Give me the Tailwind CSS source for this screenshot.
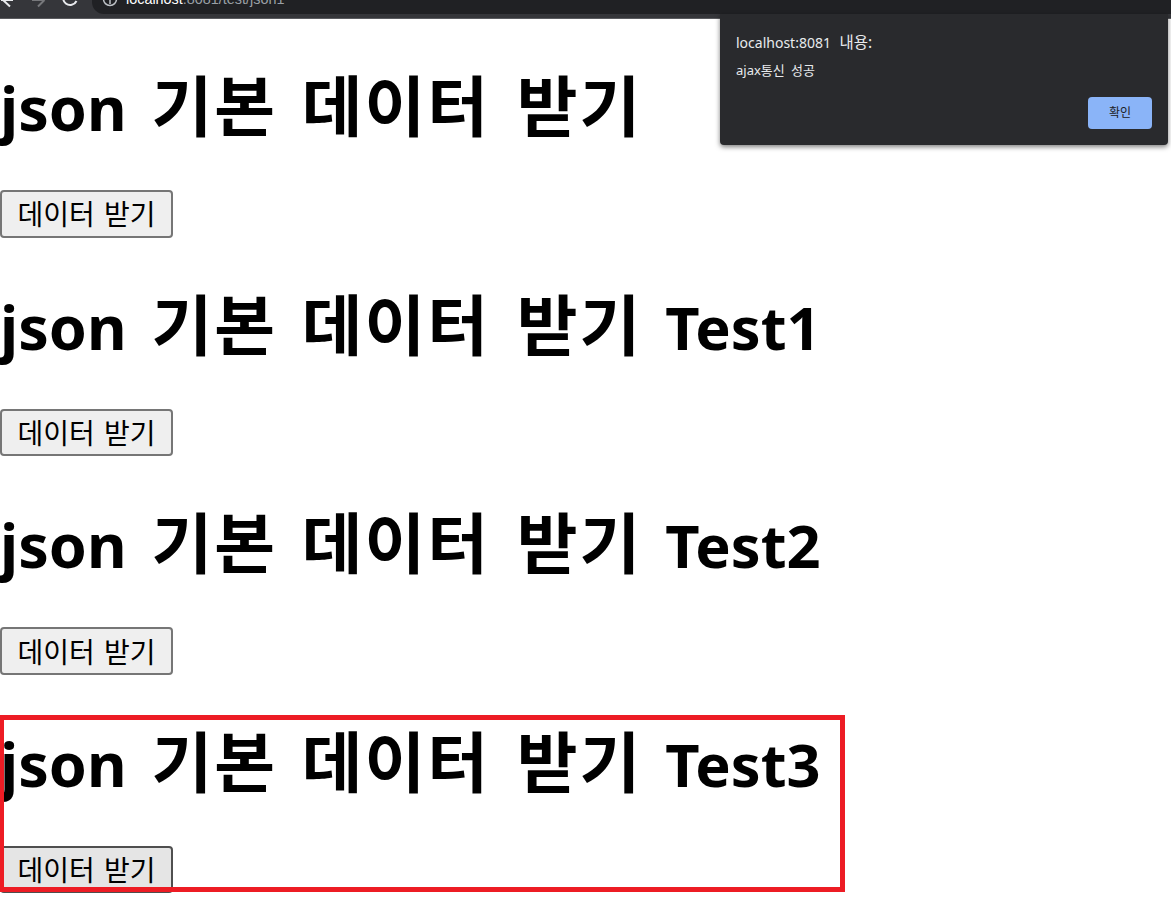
<!DOCTYPE html>
<html lang="ko">
<head>
<meta charset="utf-8">
<script src="https://cdn.jsdelivr.net/npm/@tailwindcss/browser@4"></script>
</head>
<body class="bg-white overflow-hidden font-['Noto_Sans','Noto_Sans_CJK_KR',sans-serif] text-black">
<div class="relative w-[1171px] h-[920px] overflow-hidden">
  <div class="h-[19px] bg-[#35363a] border-b border-[#5a5b5f] overflow-hidden flex items-start">
    <div class="w-[92px] h-[14px] shrink-0">
      <svg width="92" height="14" viewBox="0 0 92 14" fill="none">
        <path d="M1 0H13M3 0L10 6.5" stroke="#e8eaed" stroke-width="2"/>
        <path d="M32 0H44.5M44.5 0L38 6.5" stroke="#77787b" stroke-width="2"/>
        <path d="M76.5 1A7 7 0 1 1 76.5 -5" stroke="#e8eaed" stroke-width="2"/>
      </svg>
    </div>
    <div class="flex-1 h-[14px] bg-[#202124] rounded-bl-[12px] relative overflow-hidden">
      <svg class="absolute left-[10px] top-0" width="16" height="14" viewBox="0 0 16 14" fill="none">
        <circle cx="8" cy="-1" r="6.5" stroke="#bdc1c6" stroke-width="1.5"/>
        <path d="M8 0V4" stroke="#bdc1c6" stroke-width="1.5"/>
      </svg>
      <div class="absolute left-[34px] top-[-13px] text-[14.4px] leading-[24px] whitespace-nowrap text-[#9aa0a6] font-['Liberation_Sans',sans-serif]"><span class="text-white">localhost</span>:8081/test/json1</div>
    </div>
  </div>

  <section class="h-[218.67px] pt-[42px]">
    <h1 class="h-[88px] text-[61px] leading-[88px] font-bold whitespace-nowrap [word-spacing:9px]">json <span class="text-[66px] tracking-[2px]">기본</span> <span class="text-[66px] tracking-[2px]">데이터</span> <span class="text-[66px] tracking-[2px] ml-[2px]">받기</span></h1>
    <button class="mt-[41px] w-[173px] h-[47.5px] pt-[1px] bg-[#efefef] border-2 border-[#767676] rounded-[4px] text-[28px] leading-[40px] [word-spacing:2px] flex items-center justify-center">데이터 받기</button>
  </section>
  <section class="h-[218.67px] pt-[42px]">
    <h1 class="h-[88px] text-[61px] leading-[88px] font-bold whitespace-nowrap [word-spacing:9px]">json <span class="text-[66px] tracking-[2px]">기본</span> <span class="text-[66px] tracking-[2px]">데이터</span> <span class="text-[66px] tracking-[2px] ml-[2px]">받기</span> <span class="text-[59.5px] ml-[-2px]">Test1</span></h1>
    <button class="mt-[41px] w-[173px] h-[47.5px] pt-[1px] bg-[#efefef] border-2 border-[#767676] rounded-[4px] text-[28px] leading-[40px] [word-spacing:2px] flex items-center justify-center">데이터 받기</button>
  </section>
  <section class="h-[218.67px] pt-[42px]">
    <h1 class="h-[88px] text-[61px] leading-[88px] font-bold whitespace-nowrap [word-spacing:9px]">json <span class="text-[66px] tracking-[2px]">기본</span> <span class="text-[66px] tracking-[2px]">데이터</span> <span class="text-[66px] tracking-[2px] ml-[2px]">받기</span> <span class="text-[59.5px] ml-[-2px]">Test2</span></h1>
    <button class="mt-[41px] w-[173px] h-[47.5px] pt-[1px] bg-[#efefef] border-2 border-[#767676] rounded-[4px] text-[28px] leading-[40px] [word-spacing:2px] flex items-center justify-center">데이터 받기</button>
  </section>
  <section class="h-[218.67px] pt-[42px]">
    <h1 class="h-[88px] text-[61px] leading-[88px] font-bold whitespace-nowrap [word-spacing:9px]">json <span class="text-[66px] tracking-[2px]">기본</span> <span class="text-[66px] tracking-[2px]">데이터</span> <span class="text-[66px] tracking-[2px] ml-[2px]">받기</span> <span class="text-[59.5px] ml-[-2px]">Test3</span></h1>
    <button class="mt-[41px] w-[173px] h-[47.5px] pt-[1px] bg-[#e5e5e5] border-2 border-[#4f4f4f] rounded-[4px] text-[28px] leading-[40px] [word-spacing:2px] flex items-center justify-center">데이터 받기</button>
  </section>

  <div class="absolute left-[720px] top-[14px] w-[448px] h-[131px] bg-[#292a2d] rounded-b-[4px] shadow-[0_2px_5px_rgba(0,0,0,0.5)] text-[#e8eaed]">
    <div class="absolute left-[16px] top-[18px] text-[14px] leading-[20px] whitespace-nowrap [word-spacing:5px]">localhost:8081 <span class="text-[15.5px]">내용:</span></div>
    <div class="absolute left-[16px] top-[47px] text-[13px] leading-[18px] whitespace-nowrap [word-spacing:3px]">ajax통신 성공</div>
    <button class="absolute left-[368px] top-[83px] w-[64px] h-[32px] bg-[#8ab4f8] rounded-[4px] text-[12px] text-[#202124] flex items-center justify-center">확인</button>
  </div>

  <div class="absolute left-0 top-[715px] w-[845px] h-[177px] border-[5px] border-l-4 border-[#ed1c24]"></div>
</div>
</body>
</html>
